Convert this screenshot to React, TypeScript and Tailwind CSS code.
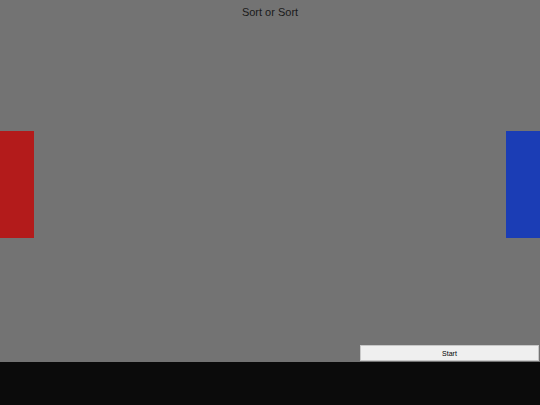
export default function App() {
  return (
    <div className="w-[540px] h-[405px] flex flex-col font-['Liberation_Sans',Arial,sans-serif] overflow-hidden">
      {/* play field */}
      <div className="flex-1 flex flex-col bg-[#737373]">
        <div className="h-[25px] flex items-center justify-center text-[11px] text-[#1a1a1a]">Sort or Sort</div>
        <div className="mt-[106px] flex justify-between">
          <div className="w-[34px] h-[107px] bg-[#b31b1b]" />
          <div className="w-[34px] h-[107px] bg-[#1b3db5]" />
        </div>
        <div className="flex-1" />
        <div className="flex justify-end pr-[1px] pb-[1px]">
          <button className="w-[179px] h-[16px] bg-[#efefef] border border-[#c8c8c8] text-[7px] text-black leading-none flex items-center justify-center">
            Start
          </button>
        </div>
      </div>
      <div className="h-[43px] bg-[#0b0b0b]" />
    </div>
  )
}
